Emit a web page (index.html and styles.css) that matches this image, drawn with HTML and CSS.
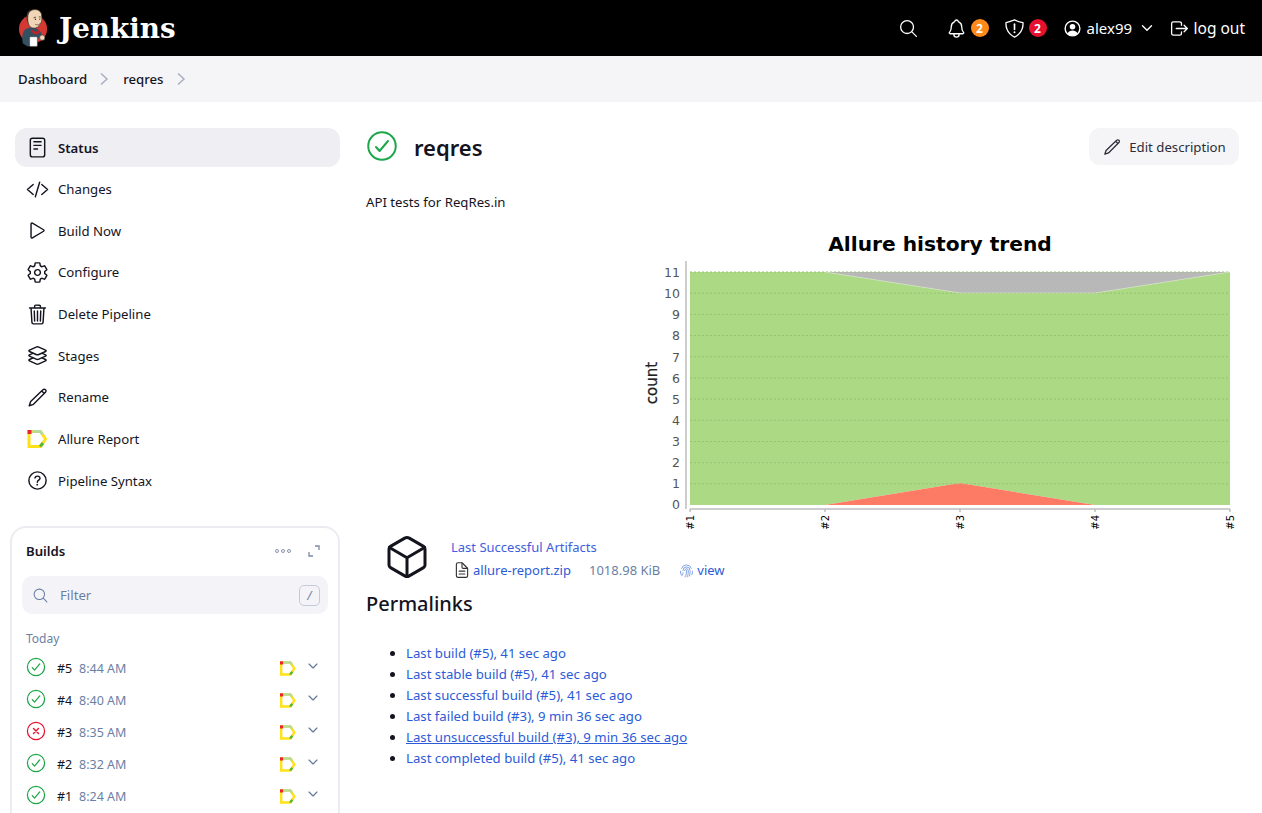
FILE: index.html
```html
<!DOCTYPE html>
<html lang="en">
<head>
<meta charset="utf-8">
<title>reqres - Jenkins</title>
<link rel="stylesheet" href="styles.css">
</head>
<body>
<svg class="defs" aria-hidden="true">
  <symbol id="allure" viewBox="0 0 20 18">
    <path d="M1.5 1.5H13L18 9L13 16.5H1.5Z" fill="none" stroke="#ffe11a" stroke-width="3" stroke-linejoin="miter"/>
    <path d="M5 1.5H13L15 4.5" fill="none" stroke="#b7dc9a" stroke-width="3"/>
    <rect x="0" y="0" width="4" height="4" fill="#e8262a"/>
    <path d="M12.5 16.5L15.5 13" fill="none" stroke="#5cb531" stroke-width="3"/>
  </symbol>
  <symbol id="ok" viewBox="0 0 512 512">
    <circle cx="256" cy="256" r="220" fill="none" stroke="currentColor" stroke-width="32"/>
    <path d="M352 176L217.600 336 160 272" fill="none" stroke="currentColor" stroke-width="32" stroke-linecap="round" stroke-linejoin="round"/>
  </symbol>
  <symbol id="fail" viewBox="0 0 512 512">
    <circle cx="256" cy="256" r="220" fill="none" stroke="currentColor" stroke-width="32"/>
    <path d="M320 192L192 320M192 192l128 128" fill="none" stroke="currentColor" stroke-width="36" stroke-linecap="round"/>
  </symbol>
  <symbol id="chev" viewBox="0 0 512 512">
    <path d="M112 184l144 144 144-144" fill="none" stroke="currentColor" stroke-width="44" stroke-linecap="round" stroke-linejoin="round"/>
  </symbol>
  <symbol id="pencil" viewBox="0 0 512 512">
    <path d="M376 84a40 40 0 0157 0l-.0 0a40 40 0 010 57L166 408 72 440l32-94zM350 110l52 52" fill="none" stroke="currentColor" stroke-width="32" stroke-linecap="round" stroke-linejoin="round"/>
  </symbol>
  <symbol id="search" viewBox="0 0 512 512">
    <path d="M221 64c-86.700 0-157 70.300-157 157s70.300 157 157 157 157-70.300 157-157S307.700 64 221 64z" fill="none" stroke="currentColor" stroke-width="32"/>
    <path d="M338.290 338.290L448 448" fill="none" stroke="currentColor" stroke-width="32" stroke-linecap="round"/>
  </symbol>
</svg>

<header class="topbar">
  <a class="brand" href="#">
    <svg class="brand-logo" viewBox="0 0 32 40" aria-hidden="true">
      <circle cx="15.500" cy="21" r="14.500" fill="#d33833"/>
      <path d="M5 36c-1-6-1-12 3-15l6-2 6 2 4 4 1 5-5 1-1 7-9 1z" fill="#335061"/>
      <path d="M14 21l4 3 4-2 1 2-3 3-4-1-3-3z" fill="#b5252b"/>
      <path d="M10 9c0-5 3-8 7.500-8s7 3 7 7c0 2 .5 4-.5 6s-3 5.500-6 6-6-.5-7-4-1-2.500-1-7z" fill="#f0d6b7" stroke="#49392f" stroke-width=".8"/>
      <path d="M10.500 13c-1-5 0-9 2.500-11.500C9.500 2.500 8.500 6 9 12c.3 2 .8 2 1.500 1z" fill="#49392f"/>
      <path d="M16 9.500l2.500-.8M21.500 8.500l2 .2" stroke="#49392f" stroke-width=".9" fill="none"/>
      <circle cx="18" cy="11" r=".7" fill="#222"/><circle cx="22.500" cy="10.800" r=".7" fill="#222"/>
      <path d="M17.500 16c1.500 1 3.500 1 5-.5" stroke="#8c4a3a" stroke-width=".8" fill="none"/>
      <rect x="12" y="29" width="8" height="10" rx="1" fill="#fff" stroke="#444" stroke-width=".6"/>
      <circle cx="25" cy="30" r="2.700" fill="#f0d6b7" stroke="#444" stroke-width=".6"/>
    </svg>
    <span class="brand-name">Jenkins</span>
  </a>
  <div class="top-actions">
    <svg class="top-icon search-top" aria-hidden="true"><use href="#search"/></svg>
    <span class="top-group bell">
      <svg class="top-icon" viewBox="0 0 512 512" aria-hidden="true"><path d="M427.680 351.430C402 320 383.870 304 383.870 217.350 383.870 138 343.350 109.730 310 96c-4.430-1.820-8.600-6-9.950-10.550C294.200 65.540 277.800 48 256 48s-38.210 17.550-44 37.470c-1.350 4.600-5.520 8.710-9.950 10.530-33.390 13.750-73.870 41.920-73.870 121.350C128.130 304 110 320 84.320 351.430 73.680 364.450 83 384 101.610 384h308.880c18.510 0 27.770-19.610 17.190-32.570zM320 384v16a64 64 0 01-128 0v-16" fill="none" stroke="currentColor" stroke-width="32" stroke-linecap="round" stroke-linejoin="round"/></svg>
      <span class="badge badge-warn">2</span>
    </span>
    <span class="top-group shield">
      <svg class="top-icon" viewBox="0 0 512 512" aria-hidden="true"><path d="M463.100 112.370C373.680 96.330 336.710 84.450 256 48c-80.710 36.450-117.680 48.330-207.100 64.370C32.700 369.130 240.580 457.790 256 464c15.420-6.210 223.300-94.870 207.100-351.630z" fill="none" stroke="currentColor" stroke-width="32" stroke-linejoin="round"/><path d="M256 150v130" stroke="currentColor" stroke-width="40" stroke-linecap="round"/><circle cx="256" cy="345" r="24" fill="currentColor"/></svg>
      <span class="badge badge-danger">2</span>
    </span>
    <span class="top-group user">
      <svg class="top-icon" viewBox="0 0 512 512" aria-hidden="true"><circle cx="256" cy="256" r="180" fill="none" stroke="currentColor" stroke-width="34"/><circle cx="256" cy="215" r="68" fill="currentColor"/><path d="M135 375c25-50 70-70 121-70s96 20 121 70a165 165 0 01-242 0z" fill="currentColor"/></svg>
      <span class="user-name">alex99</span>
      <svg class="user-chev" aria-hidden="true"><use href="#chev"/></svg>
    </span>
    <a class="top-group logout" href="#">
      <svg class="top-icon" viewBox="0 0 512 512" aria-hidden="true"><path d="M304 336v40a40 40 0 01-40 40H104a40 40 0 01-40-40V136a40 40 0 0140-40h152c22.090 0 48 17.910 48 40v40M368 336l80-80-80-80M176 256h256" fill="none" stroke="currentColor" stroke-width="32" stroke-linecap="round" stroke-linejoin="round"/></svg>
      <span>log out</span>
    </a>
  </div>
</header>

<nav class="crumbs">
  <a href="#">Dashboard</a>
  <svg class="crumb-sep" viewBox="0 0 12 14" aria-hidden="true"><path d="M3 1.500L9 7l-6 5.500"/></svg>
  <a href="#">reqres</a>
  <svg class="crumb-sep" viewBox="0 0 12 14" aria-hidden="true"><path d="M3 1.500L9 7l-6 5.500"/></svg>
</nav>

<div class="page">
  <aside class="side">
    <ul class="tasks">
      <li class="task task-active">
        <svg class="task-icon" viewBox="0 0 512 512" aria-hidden="true"><rect x="96" y="48" width="320" height="416" rx="48" fill="none" stroke="currentColor" stroke-width="32" stroke-linejoin="round"/><path d="M176 128h160M176 208h160M176 288h80" fill="none" stroke="currentColor" stroke-width="32" stroke-linecap="round"/></svg>
        <span>Status</span>
      </li>
      <li class="task">
        <svg class="task-icon" viewBox="0 0 512 512" aria-hidden="true"><path d="M160 368L32 256l128-112M352 368l128-112-128-112M304 96l-96 320" fill="none" stroke="currentColor" stroke-width="32" stroke-linecap="round" stroke-linejoin="round"/></svg>
        <span>Changes</span>
      </li>
      <li class="task">
        <svg class="task-icon" viewBox="0 0 512 512" aria-hidden="true"><path d="M112 111v290c0 17.440 17 28.520 31 20.160l247.900-148.370c12.120-7.250 12.120-26.330 0-33.580L143 90.840c-14-8.360-31 2.720-31 20.160z" fill="none" stroke="currentColor" stroke-width="32" stroke-linejoin="round"/></svg>
        <span>Build Now</span>
      </li>
      <li class="task">
        <svg class="task-icon" viewBox="0 0 512 512" aria-hidden="true"><path d="M262.290 192.310a64 64 0 1057.400 57.400 64.130 64.130 0 00-57.400-57.400zM416.390 256a154.340 154.340 0 01-1.530 20.790l45.210 35.460a10.810 10.810 0 012.450 13.750l-42.770 74a10.810 10.810 0 01-13.140 4.590l-44.900-18.080a16.110 16.110 0 00-15.170 1.750A164.480 164.480 0 01325 400.800a15.940 15.940 0 00-8.820 12.140l-6.730 47.890a11.080 11.080 0 01-10.680 9.170h-85.540a11.110 11.110 0 01-10.690-8.870l-6.720-47.820a16.070 16.070 0 00-9-12.220 155.300 155.300 0 01-21.460-12.570 16 16 0 00-15.110-1.710l-44.890 18.070a10.810 10.810 0 01-13.140-4.580l-42.770-74a10.800 10.800 0 012.450-13.750l38.210-30a16.050 16.050 0 006-14.080c-.36-4.170-.58-8.330-.58-12.500s.21-8.270.58-12.350a16 16 0 00-6.070-13.940l-38.190-30A10.810 10.810 0 0149.480 186l42.770-74a10.810 10.810 0 0113.140-4.590l44.900 18.080a16.110 16.110 0 0015.170-1.750A164.480 164.480 0 01187 111.200a15.940 15.940 0 008.820-12.140l6.730-47.890A11.080 11.080 0 01213.230 42h85.540a11.110 11.110 0 0110.690 8.870l6.720 47.820a16.070 16.070 0 009 12.220 155.300 155.300 0 0121.460 12.570 16 16 0 0015.110 1.710l44.890-18.070a10.810 10.810 0 0113.140 4.580l42.770 74a10.800 10.800 0 01-2.450 13.750l-38.210 30a16.050 16.050 0 00-6.050 14.080c.33 4.140.55 8.300.55 12.470z" fill="none" stroke="currentColor" stroke-width="32" stroke-linecap="round" stroke-linejoin="round"/></svg>
        <span>Configure</span>
      </li>
      <li class="task">
        <svg class="task-icon" viewBox="0 0 512 512" aria-hidden="true"><path d="M112 112l20 320c.950 18.490 14.400 32 32 32h184c17.670 0 30.870-13.510 32-32l20-320M80 112h352M192 112V72a23.930 23.930 0 0124-24h80a23.930 23.930 0 0124 24v40M256 176v224M184 176l8 224M328 176l-8 224" fill="none" stroke="currentColor" stroke-width="32" stroke-linecap="round" stroke-linejoin="round"/></svg>
        <span>Delete Pipeline</span>
      </li>
      <li class="task">
        <svg class="task-icon" viewBox="0 0 512 512" aria-hidden="true"><path d="M434.800 137.650l-149.360-68.100c-16.190-7.400-42.690-7.400-58.880 0L77.300 137.650c-17.600 8-17.600 21.090 0 29.090l148 67.500c16.890 7.700 44.690 7.700 61.580 0l148-67.500c17.520-8 17.520-21.100-.08-29.090zM160 308.520l-82.700 37.110c-17.600 8-17.600 21.100 0 29.100l148 67.500c16.890 7.690 44.690 7.690 61.580 0l148-67.500c17.600-8 17.600-21.100 0-29.100l-82.880-37.110M160 204.520l-82.800 37.160c-17.600 8-17.600 21.100 0 29.100l148 67.490c16.890 7.700 44.690 7.700 61.580 0l148-67.490c17.700-8 17.700-21.100.1-29.100L352 204.520" fill="none" stroke="currentColor" stroke-width="32" stroke-linecap="round" stroke-linejoin="round"/></svg>
        <span>Stages</span>
      </li>
      <li class="task">
        <svg class="task-icon" aria-hidden="true"><use href="#pencil"/></svg>
        <span>Rename</span>
      </li>
      <li class="task">
        <svg class="task-icon task-icon-allure" aria-hidden="true"><use href="#allure"/></svg>
        <span>Allure Report</span>
      </li>
      <li class="task">
        <svg class="task-icon" viewBox="0 0 512 512" aria-hidden="true"><path d="M256 64C150 64 64 150 64 256s86 192 192 192 192-86 192-192S362 64 256 64z" fill="none" stroke="currentColor" stroke-width="32"/><path d="M200 202.290s.840-17.500 19.570-32.570C230.680 160.770 244 158.180 256 158c10.930-.140 20.690 1.670 26.530 4.450 10 4.760 29.470 16.380 29.470 41.090 0 26-17 37.810-36.370 50.800S252 281.270 252 296" fill="none" stroke="currentColor" stroke-width="32" stroke-linecap="round"/><circle cx="250" cy="348" r="20" fill="currentColor"/></svg>
        <span>Pipeline Syntax</span>
      </li>
    </ul>

    <section class="builds">
      <div class="builds-head">
        <h2>Builds</h2>
        <svg class="more" viewBox="0 0 16 4" aria-hidden="true"><circle cx="2" cy="2" r="1.500"/><circle cx="8" cy="2" r="1.500"/><circle cx="14" cy="2" r="1.500"/></svg>
        <svg class="expand" viewBox="0 0 12 12" aria-hidden="true"><path d="M7 1h4v4M5 11H1V7"/></svg>
      </div>
      <div class="filter">
        <svg class="filter-icon" aria-hidden="true"><use href="#search"/></svg>
        <span class="filter-text">Filter</span>
        <kbd class="filter-key">/</kbd>
      </div>
      <div class="today">Today</div>
      <ul class="build-list">
        <li class="build"><svg class="st st-ok" aria-hidden="true"><use href="#ok"/></svg><span class="num">#5</span><span class="time">8:44 AM</span><svg class="mini-allure" aria-hidden="true"><use href="#allure"/></svg><svg class="build-chev" aria-hidden="true"><use href="#chev"/></svg></li>
        <li class="build"><svg class="st st-ok" aria-hidden="true"><use href="#ok"/></svg><span class="num">#4</span><span class="time">8:40 AM</span><svg class="mini-allure" aria-hidden="true"><use href="#allure"/></svg><svg class="build-chev" aria-hidden="true"><use href="#chev"/></svg></li>
        <li class="build"><svg class="st st-fail" aria-hidden="true"><use href="#fail"/></svg><span class="num">#3</span><span class="time">8:35 AM</span><svg class="mini-allure" aria-hidden="true"><use href="#allure"/></svg><svg class="build-chev" aria-hidden="true"><use href="#chev"/></svg></li>
        <li class="build"><svg class="st st-ok" aria-hidden="true"><use href="#ok"/></svg><span class="num">#2</span><span class="time">8:32 AM</span><svg class="mini-allure" aria-hidden="true"><use href="#allure"/></svg><svg class="build-chev" aria-hidden="true"><use href="#chev"/></svg></li>
        <li class="build"><svg class="st st-ok" aria-hidden="true"><use href="#ok"/></svg><span class="num">#1</span><span class="time">8:24 AM</span><svg class="mini-allure" aria-hidden="true"><use href="#allure"/></svg><svg class="build-chev" aria-hidden="true"><use href="#chev"/></svg></li>
      </ul>
    </section>
  </aside>

  <main class="content">
    <div class="title-row">
      <svg class="title-status" aria-hidden="true"><use href="#ok"/></svg>
      <h1>reqres</h1>
      <button class="edit-btn" type="button"><svg class="edit-icon" aria-hidden="true"><use href="#pencil"/></svg>Edit description</button>
    </div>
    <p class="desc">API tests for ReqRes.in</p>

    <div class="chart-wrap">
      <svg class="chart" viewBox="0 0 600 305" role="img" aria-label="Allure history trend">
        <polygon points="51,47 186,47 321,68 456,68 591,47" fill="#b8b8b8"/>
        <polygon points="51,47 186,47 321,68 456,68 591,47 591,280 456,280 321,258 186,280 51,280" fill="#acd984"/>
        <polygon points="186,280 321,258 456,280" fill="#fd7b64"/>
        <path class="grid" d="M51 47H591M51 68.200H591M51 89.400H591M51 110.500H591M51 131.700H591M51 152.900H591M51 174.100H591M51 195.300H591M51 216.500H591M51 237.600H591M51 258.800H591"/>
        <polyline class="seam" points="186,47 321,68 456,68 591,47"/>
        <path class="axis" d="M47 36V284M51 284H591M51 284V287M186 284V287M321 284V287M456 284V287M591 284V287"/>
        <text class="c-title" x="301" y="26" text-anchor="middle">Allure history trend</text>
        <text class="c-axis" transform="translate(18 158) rotate(-90)" text-anchor="middle">count</text>
        <g class="c-y" text-anchor="end">
          <text x="41" y="52">11</text><text x="41" y="73">10</text><text x="41" y="94">9</text><text x="41" y="115">8</text><text x="41" y="137">7</text><text x="41" y="158">6</text><text x="41" y="179">5</text><text x="41" y="200">4</text><text x="41" y="221">3</text><text x="41" y="242">2</text><text x="41" y="263">1</text><text x="41" y="284">0</text>
        </g>
        <g class="c-x" text-anchor="end">
          <text transform="translate(55 290) rotate(-90)">#1</text>
          <text transform="translate(190 290) rotate(-90)">#2</text>
          <text transform="translate(325 290) rotate(-90)">#3</text>
          <text transform="translate(460 290) rotate(-90)">#4</text>
          <text transform="translate(595 290) rotate(-90)">#5</text>
        </g>
      </svg>
    </div>

    <div class="artifacts">
      <svg class="cube" viewBox="0 0 512 512" aria-hidden="true"><path d="M448 341.370V170.610A32 32 0 00432.110 143l-152-88.460a47.940 47.940 0 00-48.240 0L79.890 143A32 32 0 0064 170.610v170.760A32 32 0 0079.890 369l152 88.460a48 48 0 0048.240 0l152-88.460A32 32 0 00448 341.370z" fill="none" stroke="currentColor" stroke-width="32" stroke-linecap="round" stroke-linejoin="round"/><path d="M69 153.990l187 110 187-110M256 463.990v-200" fill="none" stroke="currentColor" stroke-width="32" stroke-linecap="round" stroke-linejoin="round"/></svg>
      <div class="art-body">
        <a class="link" href="#">Last Successful Artifacts</a>
        <div class="art-row">
          <svg class="art-file" viewBox="0 0 512 512" aria-hidden="true"><path d="M416 221.250V416a48 48 0 01-48 48H144a48 48 0 01-48-48V96a48 48 0 0148-48h98.750a32 32 0 0122.620 9.370l141.260 141.260a32 32 0 019.370 22.620z" fill="none" stroke="currentColor" stroke-width="32" stroke-linejoin="round"/><path d="M256 56v120a32 32 0 0032 32h120M176 288h160M176 368h160" fill="none" stroke="currentColor" stroke-width="32" stroke-linecap="round" stroke-linejoin="round"/></svg>
          <a class="link" href="#">allure-report.zip</a>
          <span class="art-size">1018.98 KiB</span>
          <svg class="art-print" viewBox="0 0 24 24" aria-hidden="true"><path d="M5 9a7.500 7.500 0 0114 0M3.500 13a9 9 0 001 5M20.500 13a9 9 0 01-1 5M7 12a5 5 0 0110 0c0 3 0 5-1 8M9.500 12a2.500 2.500 0 015 0c0 3 0 6-1.500 9M12 12c0 3 0 6-2 9M7 15c0 2-.5 3-1.500 4.500"/></svg>
          <a class="link" href="#">view</a>
        </div>
      </div>
    </div>

    <h2 class="perma-title">Permalinks</h2>
    <ul class="perma">
      <li><a class="link" href="#">Last build (#5), 41 sec ago</a></li>
      <li><a class="link" href="#">Last stable build (#5), 41 sec ago</a></li>
      <li><a class="link" href="#">Last successful build (#5), 41 sec ago</a></li>
      <li><a class="link" href="#">Last failed build (#3), 9 min 36 sec ago</a></li>
      <li><a class="link link-hover" href="#">Last unsuccessful build (#3), 9 min 36 sec ago</a></li>
      <li><a class="link" href="#">Last completed build (#5), 41 sec ago</a></li>
    </ul>
  </main>
</div>
</body>
</html>
```

FILE: styles.css
```css
* { box-sizing: border-box; }
html, body { margin: 0; height: 813px; overflow: hidden; }
body {
  font-family: "Noto Sans", sans-serif;
  font-size: 13.2px;
  color: #14141f;
  background: #fff;
}
a { color: inherit; text-decoration: none; }
ul { margin: 0; padding: 0; list-style: none; }
h1, h2, p { margin: 0; }
.defs { position: absolute; width: 0; height: 0; }

.topbar {
  height: 56px;
  background: #000;
  color: #fff;
  display: flex;
  align-items: center;
  justify-content: space-between;
  padding: 0 17px 0 18px;
}
.brand { display: flex; align-items: center; gap: 10px; }
.brand-logo { width: 31px; height: 40px; }
.brand-name {
  font-family: "DejaVu Serif", serif;
  font-weight: 700;
  font-size: 27.800px;
}
.top-actions { display: flex; align-items: center; font-size: 15.500px; }
.top-group { display: flex; align-items: center; gap: 3.500px; }
.top-icon { width: 21px; height: 21px; color: #fff; }
.search-top { margin-right: 27px; }
.bell, .shield { margin-right: 15.500px; }
.user { margin-right: 12px; }
.user-name { font-size: 15px; width: 45px; }
.badge {
  width: 18px;
  height: 18px;
  border-radius: 50%;
  display: flex;
  align-items: center;
  justify-content: center;
  font-size: 12px;
  font-weight: 700;
  color: #fff;
}
.badge-warn { background: #fe8a1a; }
.badge-danger { background: #e6102f; }
.user-chev { width: 16px; height: 16px; margin: 0 2px 0 4px; }

.crumbs {
  height: 46px;
  background: #f5f5f7;
  display: flex;
  align-items: center;
  padding-left: 18px;
  font-weight: 500;
  gap: 11px;
}
.crumb-sep { width: 12px; height: 14px; margin-right: 2px; fill: none; stroke: #a6aebf; stroke-width: 1.500; }

.page {
  display: grid;
  grid-template-columns: 330px 1fr;
  column-gap: 26px;
  padding: 26px 23px 0 10px;
}
.tasks {
  margin-left: 5px;
  display: flex;
  flex-direction: column;
  gap: 2.670px;
}
.task {
  height: 39px;
  border-radius: 12px;
  padding-left: 10.500px;
  display: flex;
  align-items: center;
  gap: 9.500px;
}
.task-active { background: #eeeef3; font-weight: 600; }
.task-icon { width: 23px; height: 23px; flex: none; }
.task-icon-allure { height: 18px; }

.builds {
  margin-top: 26px;
  border: 2px solid #ebebf2;
  border-radius: 16px;
  padding: 0 10px;
  height: 320px;
}
.builds-head { display: flex; align-items: center; height: 46px; padding: 0 8px 0 4px; }
.builds-head h2 { font-size: 13.200px; font-weight: 600; margin-right: auto; }
.more { width: 16px; height: 4px; fill: none; stroke: #7d89a3; stroke-width: .9; margin-right: 17px; }
.expand { width: 12px; height: 12px; fill: none; stroke: #7d89a3; stroke-width: 1.300; }
.filter {
  height: 38px;
  margin-top: 2px;
  background: #f4f4f8;
  border-radius: 10px;
  display: flex;
  align-items: center;
  padding: 0 8px 0 10px;
  color: #6b7fa5;
}
.filter-icon { width: 17px; height: 17px; }
.filter-text { margin-left: 11px; margin-right: auto; }
.filter-key {
  width: 21px;
  height: 21px;
  border: 1px solid #c3cbda;
  border-radius: 5px;
  display: flex;
  align-items: center;
  justify-content: center;
  font-family: "Noto Sans", sans-serif;
  font-size: 12px;
  font-style: italic;
}
.today { margin: 16px 0 0 4px; font-size: 12px; color: #6b7fa5; height: 17px; line-height: 17px; }
.build-list { margin-top: 5px; }
.build {
  height: 32px;
  display: flex;
  align-items: center;
  padding-left: 4px;
}
.st { width: 20px; height: 20px; margin-top: -3px; }
.st-ok { color: #1ea64b; }
.st-fail { color: #e6102f; }
.num { margin-left: 11px; font-size: 12.500px; width: 22px; }
.time { font-size: 12.500px; color: #6b7fa5; margin-right: auto; }
.mini-allure { width: 16px; height: 15px; }
.build-chev { width: 14px; height: 14px; color: #66789c; margin: -5px 8px 0 10px; }

.content { min-width: 0; }
.title-row { display: flex; align-items: center; height: 37px; padding-left: 1px; }
.title-status { width: 32px; height: 32px; color: #1ea64b; margin: -2px 0 0 -1px; }
.title-row h1 { font-size: 22px; font-weight: 600; margin-left: 16px; margin-right: auto; }
.edit-btn {
  height: 37px;
  width: 150px;
  border: 0;
  border-radius: 11px;
  background: #f5f5f7;
  color: #2c2c38;
  font: inherit;
  display: flex;
  align-items: center;
  justify-content: center;
  gap: 7px;
}
.edit-icon { width: 20px; height: 20px; }
.desc { margin-top: 27px; line-height: 20px; }
.chart-wrap { display: flex; justify-content: flex-end; margin-top: 13px; }
.chart { width: 600px; height: 305px; }
.grid { fill: none; stroke: #97c272; stroke-width: 1; stroke-dasharray: 2 2; }
.seam { fill: none; stroke: #d4dfc8; stroke-width: .7; }
.axis { fill: none; stroke: #bdbdbd; stroke-width: 1.500; }
.c-title { font-family: "DejaVu Sans", sans-serif; font-weight: 700; font-size: 20.200px; fill: #000; }
.c-axis { font-family: "DejaVu Sans", sans-serif; font-size: 15px; fill: #222; stroke: #222; stroke-width: .25; }
.c-y { font-family: "DejaVu Sans", sans-serif; font-size: 12.500px; fill: #555; }
.c-x { font-family: "DejaVu Sans", sans-serif; font-size: 10px; fill: #000; }

.artifacts { display: flex; height: 62px; }
.cube { width: 48px; height: 48px; margin: 3px 0 0 17px; color: #14141f; flex: none; }
.art-body { margin: 7px 0 0 20px; display: flex; flex-direction: column; gap: 3px; font-size: 13px; line-height: 20px; }
.art-row { display: flex; align-items: center; }
.art-file { width: 18px; height: 18px; margin: 0 2px 0 2px; color: #333; }
.art-size { margin: 0 18px; color: #6b7fa5; }
.art-print { width: 17px; height: 17px; margin-right: 2px; fill: none; stroke: #6b93e0; stroke-width: 1.200; stroke-linecap: round; }
.link { color: #2b5bd7; }
.art-body > .link { color: #3f5ee0; }
.link-hover { text-decoration: underline; }

.perma-title { font-size: 20px; font-weight: 500; line-height: 24px; }
.perma {
  list-style: disc;
  padding-left: 40px;
  margin-top: 27px;
  line-height: 21px;
}
```
